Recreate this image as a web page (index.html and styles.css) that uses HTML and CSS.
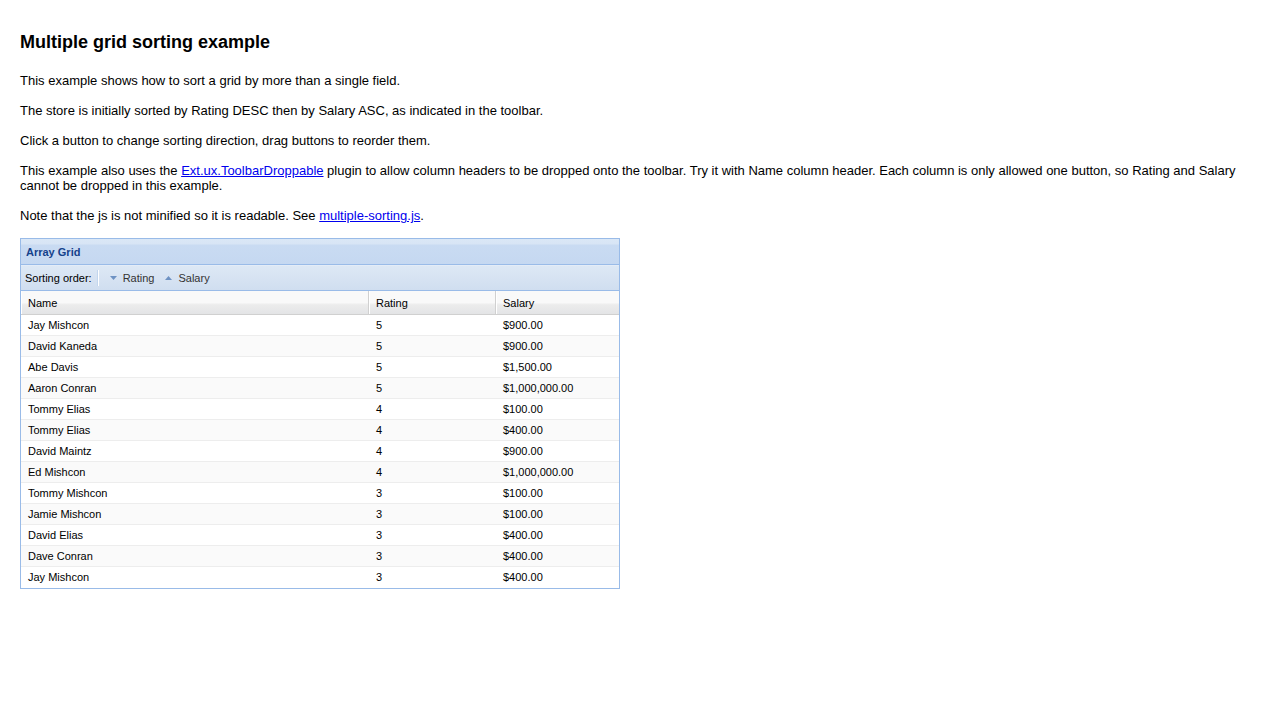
FILE: index.html
```html
<!DOCTYPE html>
<html>
<head>
<meta charset="utf-8">
<link rel="stylesheet" href="styles.css">
</head>
<body>
<h1 class="title">Multiple grid sorting example</h1>
<p class="para">This example shows how to sort a grid by more than a single field.</p>
<p class="para">The store is initially sorted by Rating DESC then by Salary ASC, as indicated in the toolbar.</p>
<p class="para">Click a button to change sorting direction, drag buttons to reorder them.</p>
<p class="para">This example also uses the <a href="#">Ext.ux.ToolbarDroppable</a> plugin to allow column headers to be dropped onto the toolbar. Try it with Name column header. Each column is only allowed one button, so Rating and Salary cannot be dropped in this example.</p>
<p class="para">Note that the js is not minified so it is readable. See <a href="#">multiple-sorting.js</a>.</p>

<div class="panel">
  <div class="panel-header">Array Grid</div>
  <div class="toolbar">
    <span class="tb-label">Sorting order:</span>
    <span class="tb-sep"></span>
    <span class="tb-btn"><svg class="arrow" width="7" height="4" viewBox="0 0 7 4"><polygon points="0,0 7,0 3.5,4" fill="#6e92c3"/></svg>Rating</span>
    <span class="tb-btn"><svg class="arrow" width="7" height="4" viewBox="0 0 7 4"><polygon points="0,4 7,4 3.5,0" fill="#6e92c3"/></svg>Salary</span>
  </div>
  <div class="grid-head">
    <div class="hcell c-name">Name</div>
    <div class="hcell c-rating">Rating</div>
    <div class="hcell c-salary">Salary</div>
  </div>
  <div class="grid-body">
    <div class="row"><div class="cell c-name">Jay Mishcon</div><div class="cell c-rating">5</div><div class="cell c-salary">$900.00</div></div>
    <div class="row"><div class="cell c-name">David Kaneda</div><div class="cell c-rating">5</div><div class="cell c-salary">$900.00</div></div>
    <div class="row"><div class="cell c-name">Abe Davis</div><div class="cell c-rating">5</div><div class="cell c-salary">$1,500.00</div></div>
    <div class="row"><div class="cell c-name">Aaron Conran</div><div class="cell c-rating">5</div><div class="cell c-salary">$1,000,000.00</div></div>
    <div class="row"><div class="cell c-name">Tommy Elias</div><div class="cell c-rating">4</div><div class="cell c-salary">$100.00</div></div>
    <div class="row"><div class="cell c-name">Tommy Elias</div><div class="cell c-rating">4</div><div class="cell c-salary">$400.00</div></div>
    <div class="row"><div class="cell c-name">David Maintz</div><div class="cell c-rating">4</div><div class="cell c-salary">$900.00</div></div>
    <div class="row"><div class="cell c-name">Ed Mishcon</div><div class="cell c-rating">4</div><div class="cell c-salary">$1,000,000.00</div></div>
    <div class="row"><div class="cell c-name">Tommy Mishcon</div><div class="cell c-rating">3</div><div class="cell c-salary">$100.00</div></div>
    <div class="row"><div class="cell c-name">Jamie Mishcon</div><div class="cell c-rating">3</div><div class="cell c-salary">$100.00</div></div>
    <div class="row"><div class="cell c-name">David Elias</div><div class="cell c-rating">3</div><div class="cell c-salary">$400.00</div></div>
    <div class="row"><div class="cell c-name">Dave Conran</div><div class="cell c-rating">3</div><div class="cell c-salary">$400.00</div></div>
    <div class="row"><div class="cell c-name">Jay Mishcon</div><div class="cell c-rating">3</div><div class="cell c-salary">$400.00</div></div>
  </div>
</div>
</body>
</html>
```

FILE: styles.css
```css
html, body {
  margin: 0;
  padding: 0;
  background: #fff;
}
body {
  padding: 20px;
  font-family: "Liberation Sans", Arial, sans-serif;
  font-size: 13px;
  color: #000;
}
.title {
  margin: 11px 0 20px 0;
  font-size: 18px;
  font-weight: bold;
  line-height: 22px;
}
.para {
  margin: 0 0 15px 0;
  line-height: 15px;
}
.para a {
  color: #0000ee;
}
.panel {
  width: 598px;
  border: 1px solid #99bbe8;
  font-family: "Liberation Sans", Arial, sans-serif;
  font-size: 11px;
}
.panel-header {
  height: 26px;
  box-sizing: border-box;
  padding: 7px 5px 0 5px;
  font-weight: bold;
  font-size: 11px;
  color: #15428b;
  background: linear-gradient(to bottom, #dae7f6 0px, #d8e5f5 5px, #c9dbf2 6px, #c5d8f1 25px);
  border-bottom: 1px solid #99bbe8;
}
.toolbar {
  height: 26px;
  box-sizing: border-box;
  display: flex;
  align-items: center;
  padding: 0 4px;
  background: linear-gradient(to bottom, #dde8f5 0%, #d0def0 100%);
  border-bottom: 1px solid #99bbe8;
  border-top: 1px solid #e4ecf7;
  font-size: 11px;
}
.tb-label {
  color: #000;
}
.tb-sep {
  width: 1px;
  height: 16px;
  margin: 0 6px 0 5px;
  background: #c2d6ee;
  border-right: 1px solid #fff;
}
.tb-btn {
  display: inline-flex;
  align-items: center;
  color: #333;
  margin-right: 6px;
  padding-left: 5px;
}
.arrow {
  margin-right: 6px;
}
.grid-head {
  display: flex;
  height: 24px;
  box-sizing: border-box;
  background: linear-gradient(to bottom, #f9f9f9 0%, #f9f9f9 50%, #ececec 60%, #e3e4e6 100%);
  border-bottom: 1px solid #d0d0d0;
}
.hcell {
  box-sizing: border-box;
  padding: 6px 6px 0 7px;
  border-right: 1px solid #d0d0d0;
  box-shadow: inset 1px 0 0 #fff;
  color: #000;
}
.hcell.c-salary {
  border-right: none;
}
.c-name { width: 348px; }
.c-rating { width: 127px; }
.c-salary { width: 123px; }
.row {
  display: flex;
  height: 21px;
  box-sizing: border-box;
  border-bottom: 1px solid #ededed;
}
.row:nth-child(even) {
  background: #fafafa;
}
.row:last-child {
  border-bottom: none;
}
.cell {
  box-sizing: border-box;
  padding: 4px 6px 0 7px;
  color: #000;
  white-space: nowrap;
}
```
